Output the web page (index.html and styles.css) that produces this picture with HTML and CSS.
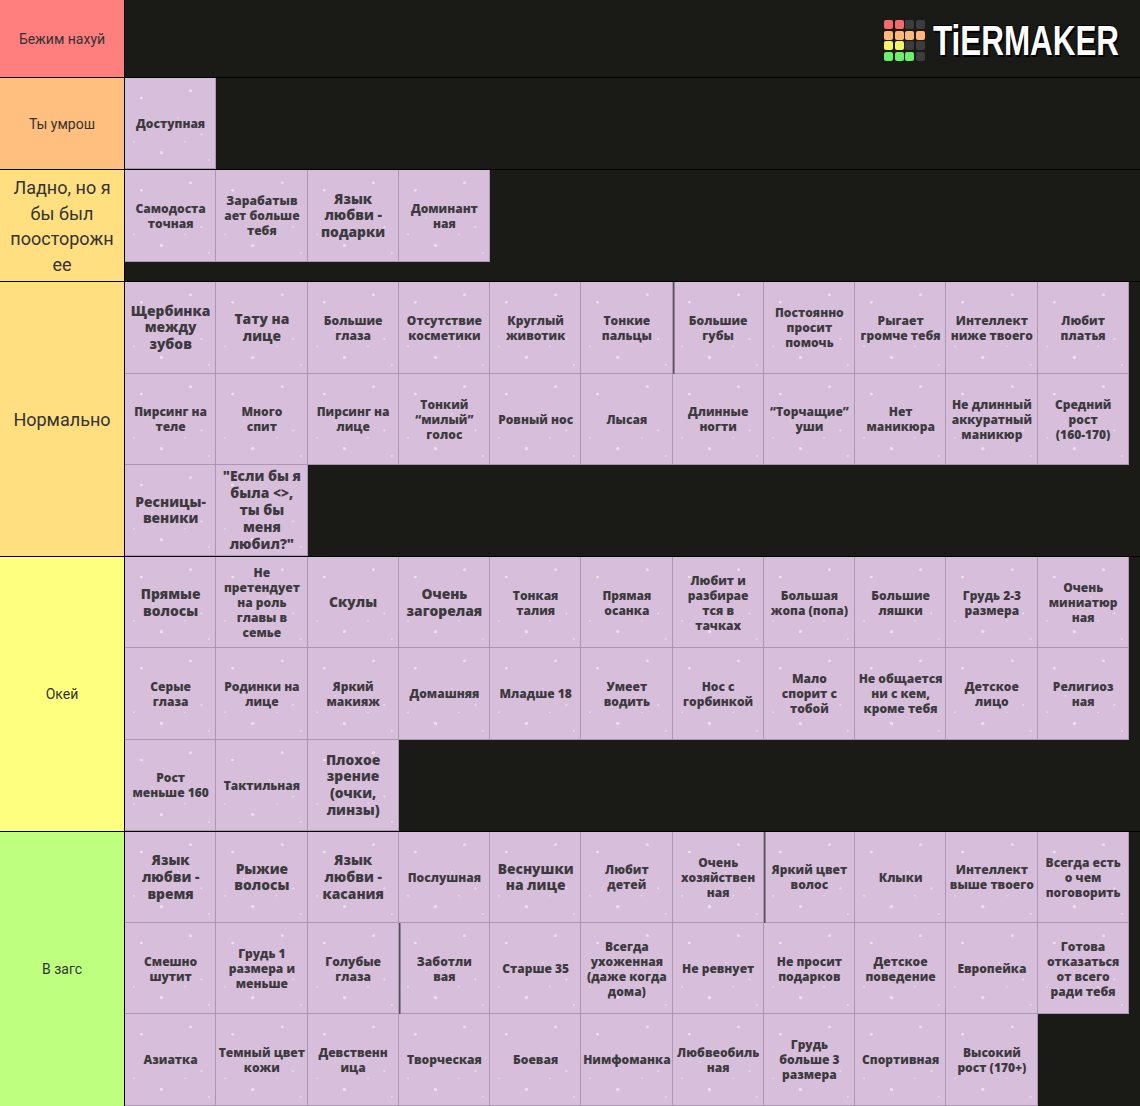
FILE: index.html
```html
<!DOCTYPE html>
<html lang="ru">
<head>
<meta charset="utf-8">
<title>Tier list</title>
<link rel="stylesheet" href="styles.css">
</head>
<body>
<div class="tierlist">
  <div class="row r1">
    <div class="label red">Бежим нахуй</div>
    <div class="items top">
      <div class="logo">
        <div class="logo-grid">
          <span class="lr"></span><span class="lr"></span><span class="ld"></span><span class="ld"></span>
          <span class="lo"></span><span class="lo"></span><span class="lo"></span><span class="lo"></span>
          <span class="ly"></span><span class="ly"></span><span class="ld"></span><span class="ld"></span>
          <span class="lg"></span><span class="lg"></span><span class="lg"></span><span class="ld"></span>
        </div>
        <div class="logo-box"><span class="logo-text">TiERMAKER</span></div>
      </div>
    </div>
  </div>

  <div class="row">
    <div class="label orange">Ты умрош</div>
    <div class="items">
      <div class="tile">Доступная</div>
    </div>
  </div>

  <div class="row r3">
    <div class="label gold big">Ладно, но я<br>бы был<br>поосторожн<br>ее</div>
    <div class="items">
      <div class="tile">Самодоста<br>точная</div>
      <div class="tile">Зарабатыв<br>ает больше<br>тебя</div>
      <div class="tile lg15">Язык<br>любви -<br>подарки</div>
      <div class="tile">Доминант<br>ная</div>
    </div>
  </div>

  <div class="row">
    <div class="label gold big">Нормально</div>
    <div class="items">
      <div class="tile lg15">Щербинка<br>между<br>зубов</div>
      <div class="tile lg15">Тату на<br>лице</div>
      <div class="tile">Большие<br>глаза</div>
      <div class="tile">Отсутствие<br>косметики</div>
      <div class="tile">Круглый<br>животик</div>
      <div class="tile">Тонкие<br>пальцы</div>
      <div class="tile dl">Большие<br>губы</div>
      <div class="tile">Постоянно<br>просит<br>помочь</div>
      <div class="tile">Рыгает<br>громче тебя</div>
      <div class="tile">Интеллект<br>ниже твоего</div>
      <div class="tile">Любит<br>платья</div>
      <div class="tile">Пирсинг на<br>теле</div>
      <div class="tile">Много<br>спит</div>
      <div class="tile">Пирсинг на<br>лице</div>
      <div class="tile">Тонкий<br>“милый”<br>голос</div>
      <div class="tile">Ровный нос</div>
      <div class="tile">Лысая</div>
      <div class="tile">Длинные<br>ногти</div>
      <div class="tile">“Торчащие”<br>уши</div>
      <div class="tile">Нет<br>маникюра</div>
      <div class="tile">Не длинный<br>аккуратный<br>маникюр</div>
      <div class="tile">Средний<br>рост<br>(160-170)</div>
      <div class="tile lg15">Ресницы-<br>веники</div>
      <div class="tile lg15">"Если бы я<br>была &lt;&gt;,<br>ты бы<br>меня<br>любил?"</div>
    </div>
  </div>

  <div class="row">
    <div class="label yellow">Окей</div>
    <div class="items">
      <div class="tile lg15">Прямые<br>волосы</div>
      <div class="tile">Не<br>претендует<br>на роль<br>главы в<br>семье</div>
      <div class="tile lg15">Скулы</div>
      <div class="tile lg15">Очень<br>загорелая</div>
      <div class="tile">Тонкая<br>талия</div>
      <div class="tile">Прямая<br>осанка</div>
      <div class="tile">Любит и<br>разбирае<br>тся в<br>тачках</div>
      <div class="tile">Большая<br>жопа (попа)</div>
      <div class="tile">Большие<br>ляшки</div>
      <div class="tile">Грудь 2-3<br>размера</div>
      <div class="tile">Очень<br>миниатюр<br>ная</div>
      <div class="tile">Серые<br>глаза</div>
      <div class="tile">Родинки на<br>лице</div>
      <div class="tile">Яркий<br>макияж</div>
      <div class="tile">Домашняя</div>
      <div class="tile">Младше 18</div>
      <div class="tile">Умеет<br>водить</div>
      <div class="tile">Нос с<br>горбинкой</div>
      <div class="tile">Мало<br>спорит с<br>тобой</div>
      <div class="tile">Не общается<br>ни с кем,<br>кроме тебя</div>
      <div class="tile">Детское<br>лицо</div>
      <div class="tile">Религиоз<br>ная</div>
      <div class="tile">Рост<br>меньше 160</div>
      <div class="tile">Тактильная</div>
      <div class="tile lg15">Плохое<br>зрение<br>(очки,<br>линзы)</div>
    </div>
  </div>

  <div class="row">
    <div class="label green">В загс</div>
    <div class="items">
      <div class="tile lg15">Язык<br>любви -<br>время</div>
      <div class="tile lg15">Рыжие<br>волосы</div>
      <div class="tile lg15">Язык<br>любви -<br>касания</div>
      <div class="tile">Послушная</div>
      <div class="tile lg15">Веснушки<br>на лице</div>
      <div class="tile">Любит<br>детей</div>
      <div class="tile">Очень<br>хозяйствен<br>ная</div>
      <div class="tile dl">Яркий цвет<br>волос</div>
      <div class="tile">Клыки</div>
      <div class="tile">Интеллект<br>выше твоего</div>
      <div class="tile">Всегда есть<br>о чем<br>поговорить</div>
      <div class="tile">Смешно<br>шутит</div>
      <div class="tile">Грудь 1<br>размера и<br>меньше</div>
      <div class="tile">Голубые<br>глаза</div>
      <div class="tile dl">Заботли<br>вая</div>
      <div class="tile">Старше 35</div>
      <div class="tile">Всегда<br>ухоженная<br>(даже когда<br>дома)</div>
      <div class="tile">Не ревнует</div>
      <div class="tile">Не просит<br>подарков</div>
      <div class="tile">Детское<br>поведение</div>
      <div class="tile">Европейка</div>
      <div class="tile">Готова<br>отказаться<br>от всего<br>ради тебя</div>
      <div class="tile">Азиатка</div>
      <div class="tile">Темный цвет<br>кожи</div>
      <div class="tile">Девственн<br>ица</div>
      <div class="tile">Творческая</div>
      <div class="tile">Боевая</div>
      <div class="tile">Нимфоманка</div>
      <div class="tile">Любвеобиль<br>ная</div>
      <div class="tile">Грудь<br>больше 3<br>размера</div>
      <div class="tile">Спортивная</div>
      <div class="tile">Высокий<br>рост (170+)</div>
    </div>
  </div>
</div>
</body>
</html>
```

FILE: styles.css
```css
html, body {
  margin: 0;
  padding: 0;
  background: #1a1a17;
}

.tierlist {
  width: 1140px;
  font-family: Roboto, "Noto Sans", sans-serif;
}

.row {
  display: flex;
  border-bottom: 1px solid #000;
  background: #1a1a17;
}

.row:last-child {
  border-bottom: none;
}

.r1 { height: 77px; }
.r3 { height: 111px; }

.label {
  width: 125px;
  flex: none;
  box-sizing: border-box;
  border-right: 1px solid #000;
  display: flex;
  align-items: center;
  justify-content: center;
  text-align: center;
  color: #333;
  font-size: 14px;
  line-height: 1.2;
  padding-top: 1px;
}

.label.big {
  font-size: 18px;
  line-height: 25.7px;
}

.red { background: #ff7f7f; }
.orange { background: #ffbf7f; }
.gold { background: #ffdf7f; }
.yellow { background: #ffff7f; }
.green { background: #bfff7f; }

.items {
  flex: 1;
  display: flex;
  flex-wrap: wrap;
  align-content: flex-start;
}

.items.top {
  align-items: center;
  align-content: center;
  justify-content: flex-end;
  padding: 4px 20px 0 0;
}

.tile {
  width: 91.25px;
  height: 91.25px;
  box-sizing: border-box;
  display: flex;
  align-items: center;
  justify-content: center;
  text-align: center;
  white-space: nowrap;
  font-family: "Open Sans", "DejaVu Sans", sans-serif;
  font-weight: 800;
  font-size: 12px;
  line-height: 15px;
  color: #3d3a3e;
  background-color: #d7bfdc;
  background-image:
    radial-gradient(circle at 18% 22%, rgba(255,255,255,.55) 0 1px, transparent 1.6px),
    radial-gradient(circle at 72% 14%, rgba(255,255,255,.45) 0 1.2px, transparent 1.8px),
    radial-gradient(circle at 84% 62%, rgba(255,255,255,.4) 0 0.8px, transparent 1.4px),
    radial-gradient(circle at 40% 82%, rgba(255,255,255,.5) 0 1.3px, transparent 2px),
    radial-gradient(circle at 10% 70%, rgba(255,255,255,.35) 0 0.7px, transparent 1.3px),
    radial-gradient(circle at 58% 44%, rgba(255,255,255,.3) 0 0.7px, transparent 1.2px),
    radial-gradient(circle at 30% 52%, rgba(255,255,255,.3) 0 0.6px, transparent 1.1px),
    radial-gradient(circle at 66% 70%, rgba(255,255,255,.35) 0 0.6px, transparent 1.1px),
    radial-gradient(circle at 92% 90%, rgba(255,255,255,.35) 0 0.8px, transparent 1.4px);
  box-shadow: inset -1px -1px 0 rgba(120, 100, 125, .45);
}

.tile.lg15 {
  font-size: 13.8px;
  line-height: 16.8px;
}

.tile.dl {
  box-shadow: inset 1.5px 0 0 #55505a, inset -1px -1px 0 rgba(120, 100, 125, .45);
}

.logo {
  display: flex;
  align-items: center;
  gap: 8px;
}

.logo-grid {
  display: grid;
  grid-template-columns: repeat(4, 9px);
  grid-auto-rows: 9px;
  gap: 1.6px;
}

.logo-grid span {
  border-radius: 2px;
}

.lr { background: #f26b6b; }
.lo { background: #ffb77a; }
.ly { background: #f4f46a; }
.lg { background: #6cef6c; }
.ld { background: #3c3c3c; }

.logo-box {
  width: 187px;
  height: 34px;
  overflow: visible;
  display: flex;
  align-items: center;
}

.logo-text {
  display: inline-block;
  font-family: "Liberation Sans", Arial, sans-serif;
  font-weight: 700;
  font-size: 43px;
  line-height: 1;
  color: #fff;
  white-space: nowrap;
  transform: scaleX(.73);
  transform-origin: left center;
  text-shadow: 2px 2px 0 #000, -1px -1px 0 #000;
}
```
